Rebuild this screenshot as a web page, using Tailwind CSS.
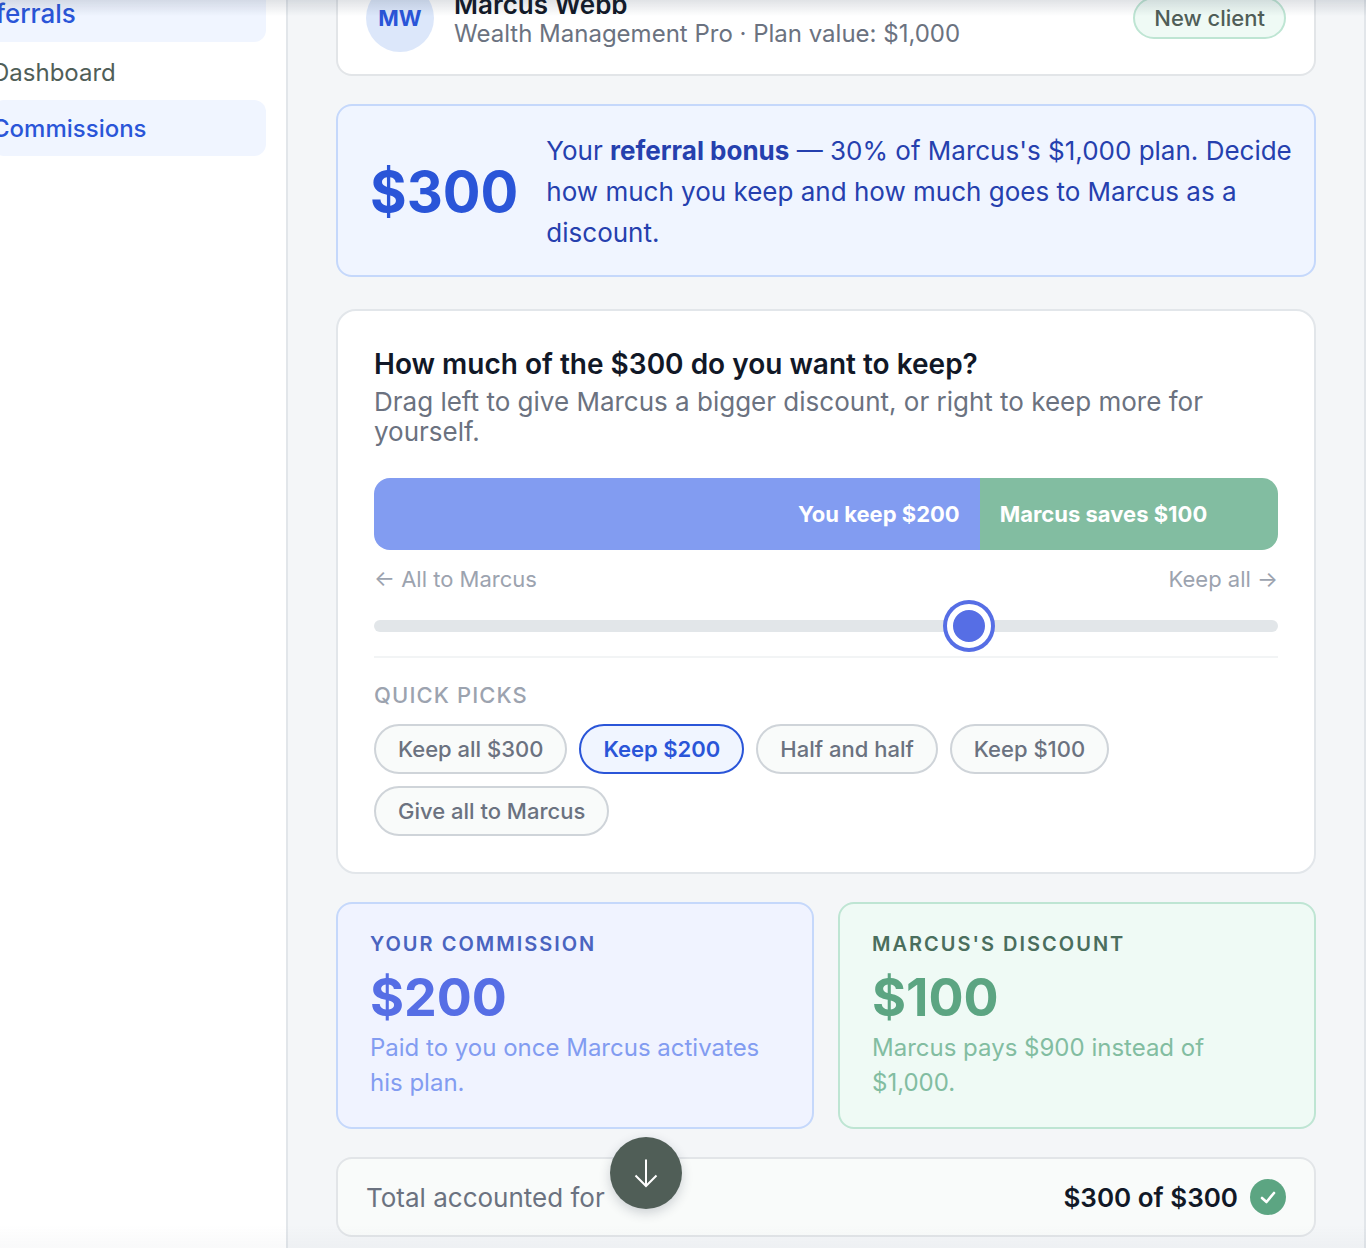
<!DOCTYPE html>
<html lang="en">
<head>
    <meta charset="UTF-8">
    <meta name="viewport" content="width=device-width, initial-scale=1.0">
    <title>Commissions</title>
    <script src="https://cdn.jsdelivr.net/npm/@tailwindcss/browser@4"></script>
</head>
<body class="h-screen overflow-hidden bg-[#f4f6f8] font-['Inter',sans-serif] text-[#111827]">
    <div class="flex min-h-screen">
        <!-- Sidebar -->
        <aside class="w-[288px] shrink-0 overflow-hidden border-r-2 border-[#e2e6ea] bg-white pr-5">
            <nav class="-mt-4 flex flex-col text-2xl">
                <a href="#" class="-ml-9 mb-0.5 flex h-[58px] items-center rounded-xl bg-[#f0f5ff] pt-0.5 text-[26px] font-medium text-[#2a55d8]">Referrals</a>
                <a href="#" class="-ml-2 flex h-14 items-center rounded-xl pt-0.5 text-[#505e58]">Dashboard</a>
                <a href="#" class="-ml-2 flex h-14 items-center rounded-xl bg-[#f0f5ff] pt-0.5 font-medium text-[#2a55d8]">Commissions</a>
            </nav>
        </aside>

        <main class="min-w-0 flex-1 border-r-2 border-[#e2e6ea] px-12">
            <!-- Client -->
            <section class="-mt-10 mb-7 flex items-center gap-5 rounded-2xl border-2 border-[#e2e5e8] bg-white px-7 py-[22px]">
                <div class="flex size-[68px] shrink-0 items-center justify-center rounded-full bg-[#dce7fa] text-[22px] font-bold text-[#2a55d8]">MW</div>
                <div class="flex-1 pt-0.5">
                    <h1 class="text-[26px] leading-[30px] font-semibold">Marcus Webb</h1>
                    <p class="text-2xl leading-[28px] text-[#6b7280]">Wealth Management Pro · Plan value: $1,000</p>
                </div>
                <span class="rounded-full border-2 border-[#bee5d3] bg-[#effaf5] px-[19px] py-1.5 text-[22px] leading-[26px] font-medium text-[#505e58]">New client</span>
            </section>

            <!-- Bonus -->
            <section class="mb-8 flex items-center gap-7 rounded-2xl border-2 border-[#c5d8fb] bg-[#f0f5ff] pt-6 pr-5 pb-[22px] pl-8">
                <div class="text-[56px] leading-none font-bold text-[#2a55d8]">$300</div>
                <p class="text-[26px] leading-[41px] text-[#2540ae]">Your <strong class="font-bold">referral bonus</strong> — 30% of Marcus's $1,000 plan. Decide how much you keep and how much goes to Marcus as a discount.</p>
            </section>

            <!-- Split -->
            <section class="mb-7 rounded-[20px] border-2 border-[#e2e6ea] bg-white p-9">
                <h2 class="mb-1.5 text-[28px] leading-[34px] font-semibold">How much of the $300 do you want to keep?</h2>
                <p class="mb-[31px] text-[26px] leading-[30px] text-[#6b7280]">Drag left to give Marcus a bigger discount, or right to keep more for yourself.</p>

                <div class="mb-4 flex h-[72px] overflow-hidden rounded-2xl text-[22px] font-bold text-white">
                    <div class="flex items-center justify-end bg-[#829cf1] px-5" style="width: 67%">You keep $200</div>
                    <div class="flex flex-1 items-center bg-[#82bda1] px-5">Marcus saves $100</div>
                </div>
                <div class="mb-7 flex justify-between text-[22px] leading-[26px] text-[#9ca3af]">
                    <span>← All to Marcus</span>
                    <span>Keep all →</span>
                </div>
                <input type="range" min="0" max="300" value="200" aria-label="Amount you keep" class="mb-6 block h-3 w-full cursor-pointer appearance-none rounded-full bg-[#e2e6e9] [&::-webkit-slider-thumb]:size-11 [&::-webkit-slider-thumb]:appearance-none [&::-webkit-slider-thumb]:rounded-full [&::-webkit-slider-thumb]:border-[6px] [&::-webkit-slider-thumb]:border-solid [&::-webkit-slider-thumb]:border-white [&::-webkit-slider-thumb]:bg-[#566ee5] [&::-webkit-slider-thumb]:shadow-[0_0_0_4px_#566ee5]">

                <div class="border-t-2 border-[#f2f4f5] pt-6">
                    <h3 class="mb-4 text-[22px] leading-[26px] font-medium tracking-wider text-[#9ca3af] uppercase">Quick picks</h3>
                    <div class="flex flex-wrap gap-3 text-[22px] leading-[26px] font-medium text-[#6b7280]">
                        <button class="rounded-full border-2 border-[#cfd4d9] bg-[#f9fbfa] px-[22px] py-2.5">Keep all $300</button>
                        <button class="rounded-full border-2 border-[#2a55d8] bg-[#f0f5ff] px-[22px] py-2.5 font-semibold text-[#2a55d8]">Keep $200</button>
                        <button class="rounded-full border-2 border-[#cfd4d9] bg-[#f9fbfa] px-[22px] py-2.5">Half and half</button>
                        <button class="rounded-full border-2 border-[#cfd4d9] bg-[#f9fbfa] px-[22px] py-2.5">Keep $100</button>
                        <button class="rounded-full border-2 border-[#cfd4d9] bg-[#f9fbfa] px-[22px] py-2.5">Give all to Marcus</button>
                    </div>
                </div>
            </section>

            <!-- Results -->
            <div class="mb-7 grid grid-cols-2 gap-6">
                <section class="rounded-2xl border-2 border-[#c5d8fb] bg-[#f0f3ff] px-8 pt-7 pb-[27px]">
                    <h3 class="mb-3.5 text-xl leading-[24px] font-semibold tracking-widest text-[#4a64bf] uppercase">Your commission</h3>
                    <div class="mb-1 text-[52px] leading-[56px] font-bold text-[#566ee5]">$200</div>
                    <p class="text-2xl leading-[35px] text-[#829cf1]">Paid to you once Marcus activates his plan.</p>
                </section>
                <section class="rounded-2xl border-2 border-[#bee5d3] bg-[#effaf5] px-8 pt-7 pb-[27px]">
                    <h3 class="mb-3.5 text-xl leading-[24px] font-semibold tracking-widest text-[#4a6e5d] uppercase">Marcus's discount</h3>
                    <div class="mb-1 text-[52px] leading-[56px] font-bold text-[#5ca582]">$100</div>
                    <p class="text-2xl leading-[35px] text-[#82bda1]">Marcus pays $900 instead of $1,000.</p>
                </section>
            </div>

            <!-- Total -->
            <section class="flex h-20 items-center rounded-2xl border-2 border-[#e2e5e8] bg-[#f9fbfa] px-7 text-[26px]">
                <span class="flex-1 text-[#6b7280]">Total accounted for</span>
                <strong class="mr-3 font-semibold">$300 of $300</strong>
                <span class="flex size-9 items-center justify-center rounded-full bg-[#5ca582]">
                    <svg class="size-9" viewBox="0 0 36 36" fill="none" stroke="#fff" stroke-width="2.6" stroke-linecap="round" stroke-linejoin="round"><path d="M12 19l4.500 4 7.500-9"/></svg>
                </span>
            </section>
        </main>
    </div>

    <!-- Edge shadows -->
    <div class="pointer-events-none fixed inset-x-0 top-0 h-4 bg-linear-to-b from-slate-700/15 to-transparent"></div>
    <div class="pointer-events-none fixed inset-x-0 bottom-0 h-6 bg-linear-to-t from-slate-700/3 to-transparent"></div>

    <button aria-label="Scroll down" class="fixed bottom-[39px] left-[610px] flex size-[72px] items-center justify-center rounded-full bg-[#505e57] shadow-[0_4px_12px_rgba(30,41,59,0.2)]">
        <svg class="size-[72px]" viewBox="0 0 72 72" fill="none" stroke="#fff" stroke-width="2"><path d="M36 22.500V49M25.500 38.500L36 49l10.500-10.500"/></svg>
    </button>
</body>
</html>
